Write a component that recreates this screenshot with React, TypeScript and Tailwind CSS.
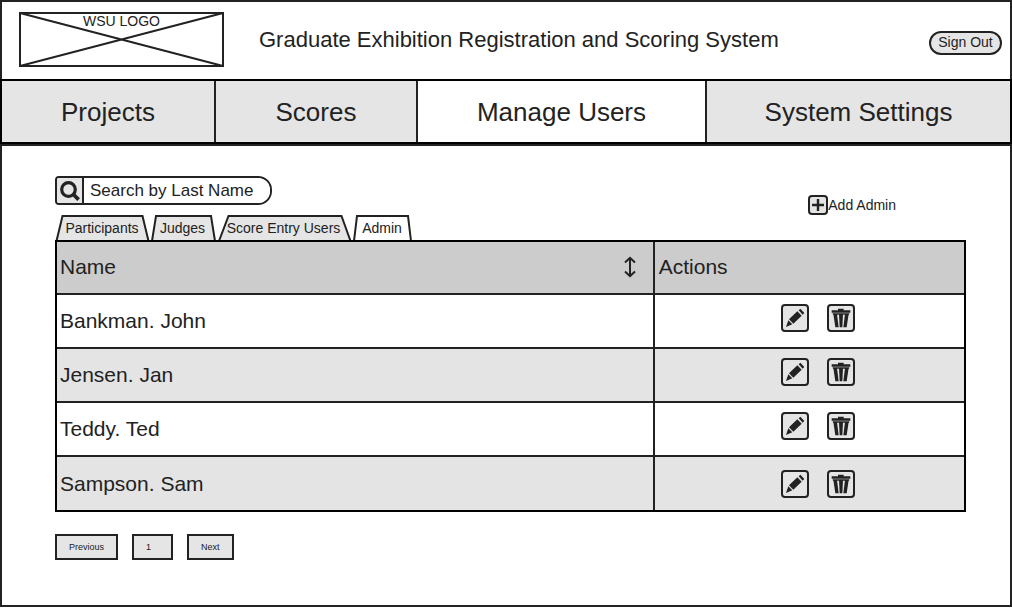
import React from "react";

const navItems = [
  { label: "Projects", active: false },
  { label: "Scores", active: false },
  { label: "Manage Users", active: true },
  { label: "System Settings", active: false },
];

const tabs = [
  { label: "Participants", active: false, size: "w-[94px]", width: 94, path: "M1.5 26L7.5 1H87.5L93.5 26" },
  { label: "Judges", active: false, size: "w-[65px]", width: 65, path: "M2 26L6 1H61L65 26" },
  { label: "Score Entry Users", active: false, size: "w-[135px]", width: 135, path: "M3 26L12.5 1H125.5L134.5 26" },
  { label: "Admin", active: true, size: "w-[60px]", width: 60, path: "M2 26L5 1H56L59 26" },
];

const admins = ["Bankman. John", "Jensen. Jan", "Teddy. Ted", "Sampson. Sam"];

const pages = ["Previous", "1", "Next"];

function Logo() {
  return (
    <div className="relative h-[55px] w-[205px] shrink-0">
      <svg className="absolute inset-0" width="205" height="55" viewBox="0 0 205 55" fill="none" stroke="#222" strokeWidth="2">
        <rect x="1" y="1" width="203" height="53" />
        <path d="M1 1L204 54M1 54L204 1" />
      </svg>
      <span className="relative block text-center text-sm leading-[18px]">WSU LOGO</span>
    </div>
  );
}

function PencilIcon() {
  return (
    <svg width="24" height="24" viewBox="6 6 72 72" fill="#222" aria-hidden="true">
      <path d="M58 14L70 27L65 32L53 19Z" />
      <path d="M49 22L62 35L37 59L24 46Z" />
      <path d="M22 49L34 61L15 69Z" />
    </svg>
  );
}

function TrashIcon() {
  return (
    <svg width="24" height="24" viewBox="6 6 72 72" fill="#222" aria-hidden="true">
      <path d="M33 14H50V19H70V26H14V19H33Z" />
      <path d="M17 28H67L66 32H18Z" />
      <path d="M19 30H30L35 70H25Z" />
      <path d="M36 30H48L46 70H38Z" />
      <path d="M54 30H65L59 70H49Z" />
    </svg>
  );
}

function IconButton({ label, children }: { label: string; children: React.ReactNode }) {
  return (
    <button type="button" aria-label={label} className="flex size-7 items-center justify-center rounded border-2 border-[#222] bg-[#e5e5e5]">
      {children}
    </button>
  );
}

export default function App() {
  return (
    <div className="flex min-h-screen flex-col bg-white pb-px font-['Liberation_Sans',Arial,sans-serif] text-[#222]">
      <header className="flex items-start border-2 border-b-0 border-[#222] pt-2.5 pr-2 pb-3 pl-[17px]">
        <Logo />
        <h1 className="ml-[35px] self-center text-[22px] leading-7">Graduate Exhibition Registration and Scoring System</h1>
        <button type="button" className="mt-[19px] ml-auto h-6 w-[73px] shrink-0 rounded-xl border-2 border-[#222] bg-[#e5e5e5] pb-0.5 text-sm leading-4">
          Sign Out
        </button>
      </header>

      <nav className="grid grid-cols-[214fr_202fr_289fr_303fr] border-2 border-black">
        {navItems.map((item) => (
          <a
            key={item.label}
            href="#"
            aria-current={item.active ? "page" : undefined}
            className={`flex h-[61px] items-center justify-center border-r-2 border-[#222] pt-0.5 text-[26px] last:border-r-0 ${item.active ? "bg-white" : "bg-[#e5e5e5]"}`}
          >
            {item.label}
          </a>
        ))}
      </nav>

      <main className="grow border-2 border-[#222] pt-[30px] pr-11 pb-10 pl-[53px]">
        <div className="flex justify-between">
          <div className="flex h-[29px] w-[217px] overflow-hidden rounded-l rounded-r-[14px] border-2 border-[#222]">
            <button type="button" aria-label="Search" className="flex w-[27px] shrink-0 items-center justify-center border-r-2 border-[#222] bg-[#e5e5e5]">
              <svg width="20" height="20" viewBox="0 0 20 20" fill="none" stroke="#222" aria-hidden="true">
                <circle cx="8.5" cy="8.5" r="6.8" strokeWidth="3.2" />
                <path d="M13.5 13.5L18.6 18.6" strokeWidth="3.8" />
              </svg>
            </button>
            <input
              type="text"
              aria-label="Search by Last Name"
              placeholder="Search by Last Name"
              className="min-w-0 grow bg-white pl-1.5 text-[17px] outline-none placeholder:text-[#222]"
            />
          </div>
          <button type="button" className="mt-[19px] mr-[70px] flex h-5 items-center text-sm">
            <span className="flex size-5 items-center justify-center rounded-sm border-2 border-[#222] bg-[#e5e5e5]">
              <svg width="12" height="12" viewBox="0 0 12 12" stroke="#222" strokeWidth="2.4" aria-hidden="true">
                <path d="M6 0V12M0 6H12" />
              </svg>
            </span>
            Add Admin
          </button>
        </div>

        <div role="tablist" className="flex gap-px">
          {tabs.map((tab) => (
            <button key={tab.label} type="button" role="tab" aria-selected={tab.active} className={`relative h-[25px] whitespace-nowrap text-sm ${tab.size}`}>
              <svg
                className="absolute inset-0 overflow-visible"
                width={tab.width}
                height="25"
                viewBox={`0 0 ${tab.width} 25`}
                fill={tab.active ? "#fff" : "#e5e5e5"}
                stroke="#222"
                strokeWidth="2"
                aria-hidden="true"
              >
                <path d={tab.path} />
              </svg>
              <span className="relative">{tab.label}</span>
            </button>
          ))}
        </div>

        <table className="relative w-full table-fixed border-separate border-spacing-0 border-2 border-black text-left text-[21px]">
          <colgroup>
            <col className="w-[65.9%]" />
            <col />
          </colgroup>
          <thead>
            <tr className="h-[53px] bg-[#ccc]">
              <th className="border-r-2 border-b-2 border-[#222] pr-4 pb-0.5 pl-[3px] font-normal">
                <div className="flex items-center justify-between">
                  Name
                  <button type="button" aria-label="Sort by name">
                    <svg width="14" height="22" viewBox="0 0 14 22" fill="none" stroke="#222" strokeWidth="2" aria-hidden="true">
                      <path d="M7 2V20M2 6.5L7 1.8L12 6.5M2 15.5L7 20.2L12 15.5" />
                    </svg>
                  </button>
                </div>
              </th>
              <th className="border-b-2 border-[#222] pb-0.5 pl-1 font-normal">Actions</th>
            </tr>
          </thead>
          <tbody>
            {admins.map((name) => (
              <tr key={name} className="group h-[54px] odd:bg-white even:bg-[#e4e4e4] last:h-[53px]">
                <td className="border-r-2 border-b-2 border-[#222] pl-[3px] group-last:border-b-0">{name}</td>
                <td className="border-b-2 border-[#222] pb-1.5 pl-[17px] group-last:border-b-0 group-last:pb-0">
                  <div className="flex justify-center gap-[18px]">
                    <IconButton label={`Edit ${name}`}>
                      <PencilIcon />
                    </IconButton>
                    <IconButton label={`Delete ${name}`}>
                      <TrashIcon />
                    </IconButton>
                  </div>
                </td>
              </tr>
            ))}
          </tbody>
        </table>

        <div className="mt-[22px] flex gap-3.5">
          {pages.map((page) => (
            <button key={page} type="button" className="h-[26px] min-w-[41px] border-2 border-[#222] bg-[#e5e5e5] px-3 pt-0.5 text-left text-[9px]">
              {page}
            </button>
          ))}
        </div>
      </main>
    </div>
  );
}
